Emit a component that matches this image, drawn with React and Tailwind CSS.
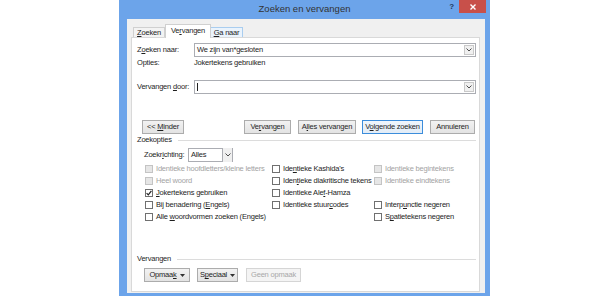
import React from 'react';

const Chevron = () => (
  <svg width="6" height="4" viewBox="0 0 6 4">
    <path d="M0.5 0.5 L3 3 L5.5 0.5" fill="none" stroke="#4d4d4d" strokeWidth="1" />
  </svg>
);

const Caret = () => (
  <svg width="5" height="3" viewBox="0 0 5 3" className="ml-[3px]">
    <path d="M0 0 H5 L2.5 3 Z" fill="#333" />
  </svg>
);

const Combo = ({ value, className = '' }) => (
  <div className={`flex h-[14px] items-center border border-[#abadb3] bg-white ${className}`}>
    <div className="flex-1 pl-[2px] leading-none text-[#1e1e1e]">{value}</div>
    <div className="mr-[1px] flex h-[10px] w-[10px] items-center justify-center border border-[#c9c9c9] bg-[#f0f0f0]">
      <Chevron />
    </div>
  </div>
);

const Btn = ({ children, className = '', primary, disabled }) => {
  let look = 'border-[#acacac] bg-gradient-to-b from-[#f2f2f2] to-[#e3e3e3] text-[#1e1e1e]';
  if (primary) look = 'border-[#3c8ddb] bg-gradient-to-b from-[#f0f6fc] to-[#e2ecf6] text-[#1e1e1e]';
  if (disabled) look = 'border-[#d5d5d5] bg-[#f4f4f4] text-[#a8a8a8]';
  return (
    <div className={`flex h-[14px] items-center justify-center whitespace-nowrap border leading-none ${look} ${className}`}>
      {children}
    </div>
  );
};

const Cb = ({ label, checked, disabled }) => (
  <div className="flex h-[12px] items-center gap-[3px] whitespace-nowrap">
    <div
      className={`flex h-[8px] w-[8px] shrink-0 items-center justify-center border ${
        disabled ? 'border-[#c4c4c4] bg-[#e6e6e6]' : 'border-[#707070] bg-white'
      }`}
    >
      {checked && (
        <svg width="6" height="6" viewBox="0 0 6 6">
          <path d="M0.6 3.2 L2.3 4.9 L5.4 0.8" fill="none" stroke="#222" strokeWidth="1.2" />
        </svg>
      )}
    </div>
    <span className={`leading-none ${disabled ? 'text-[#a3a3a3]' : 'text-[#1e1e1e]'}`}>{label}</span>
  </div>
);

const Group = ({ title }) => (
  <div className="flex h-[10px] items-center gap-[6px]">
    <span className="leading-none text-[#1e1e1e]">{title}</span>
    <div className="h-px flex-1 bg-[#dcdcdc]" />
  </div>
);

export default function App() {
  return (
    <div className="h-[300px] w-[612px] bg-white font-['Liberation_Sans',Arial,sans-serif] text-[7.5px] tracking-[-0.2px] text-[#1e1e1e]">
      <div className="ml-[119px] flex h-[296px] w-[371px] flex-col bg-[#6ca4ea] pb-[3px] pl-[8px] pr-[5px]">
        {/* title bar */}
        <div className="-ml-[8px] -mr-[5px] grid h-[19px] grid-cols-[1fr_auto_1fr]">
          <div />
          <div className="pt-[4px] text-[9.5px] leading-none tracking-normal text-[#333]">Zoeken en vervangen</div>
          <div className="flex justify-end">
            <div className="mr-[5px] pt-[3px] text-[8px] font-bold leading-none text-[#1f3a5e]">?</div>
            <div className="mr-[4px] flex h-[13px] w-[27px] items-center justify-center bg-[#c8504a]">
              <svg width="6" height="6" viewBox="0 0 6 6">
                <path d="M0.5 0.5 L5.5 5.5 M5.5 0.5 L0.5 5.5" stroke="#fff" strokeWidth="1.4" />
              </svg>
            </div>
          </div>
        </div>

        {/* client area */}
        <div className="flex flex-1 flex-col bg-[#f0f0f0] pl-[4px] pr-[5px] pt-[5px]">
          {/* tabs */}
          <div className="flex items-end pl-[2px]">
            <div className="flex h-[10px] w-[32px] items-center justify-center border border-b-0 border-[#d0d0d0] bg-[#f3f3f3] leading-none">
              <span><u>Z</u>oeken</span>
            </div>
            <div className="relative z-10 -mb-px flex h-[14px] w-[46px] items-center justify-center border border-b-0 border-[#d0d0d0] bg-white pb-[2px] leading-none">
              <span>Ve<u>r</u>vangen</span>
            </div>
            <div className="flex h-[10px] w-[32px] items-center justify-center border border-b-0 border-l-0 border-[#a9cdef] bg-[#eaf3fc] leading-none">
              <span><u>G</u>a naar</span>
            </div>
          </div>

          {/* panel */}
          <div className="flex h-[255px] flex-col border border-[#d9d9d9] bg-white pl-[5px] pr-[3px] pt-[5px]">
            <div className="flex items-center">
              <div className="w-[57px] whitespace-nowrap leading-none">Z<u>o</u>eken naar:</div>
              <Combo value="We zijn van*gesloten" className="flex-1" />
            </div>
            <div className="flex h-[12px] items-center">
              <div className="w-[57px] leading-none">Opties:</div>
              <div className="leading-none">Jokertekens gebruiken</div>
            </div>

            <div className="mt-[11px] flex items-center">
              <div className="w-[57px] whitespace-nowrap leading-none">Vervangen <u>d</u>oor:</div>
              <div className="flex flex-1">
                <Combo value={<span className="inline-block h-[8px] w-px bg-[#222] align-middle" />} className="flex-1" />
              </div>
            </div>

            <div className="mt-[26px] flex items-center">
              <Btn className="ml-[5px] w-[42px]"><span>&lt;&lt; <u>M</u>inder</span></Btn>
              <Btn className="ml-[60px] w-[47px]"><span>Ve<u>r</u>vangen</span></Btn>
              <Btn className="ml-[7px] w-[58px]"><span>A<u>l</u>les vervangen</span></Btn>
              <Btn primary className="ml-[6px] w-[61px]"><span>V<u>o</u>lgende zoeken</span></Btn>
              <Btn className="ml-[7px] w-[45px]">Annuleren</Btn>
            </div>

            <div className="mt-px">
              <Group title="Zoekopties" />
            </div>

            <div className="ml-[7px] mt-[3px] flex items-center">
              <div className="w-[44px] whitespace-nowrap leading-none">Zoekr<u>i</u>chting:</div>
              <div className="flex h-[14px] w-[45px] items-center border border-[#abadb3] bg-white">
                <div className="flex-1 pl-[2px] leading-none">Alles</div>
                <div className="flex h-[14px] w-[10px] items-center justify-center border-l border-[#abadb3] bg-[#f0f0f0]">
                  <Chevron />
                </div>
              </div>
            </div>

            <div className="ml-[8px] mt-px flex">
              <div className="flex w-[127px] flex-col">
                <Cb disabled label="Identieke hoofdletters/kleine letters" />
                <Cb disabled label="Heel woord" />
                <Cb checked label={<><u>J</u>okertekens gebruiken</>} />
                <Cb label={<>Bij benadering (<u>E</u>ngels)</>} />
                <Cb label={<>Alle <u>w</u>oordvormen zoeken (Engels)</>} />
              </div>
              <div className="flex w-[102px] flex-col">
                <Cb label={<>Ide<u>n</u>tieke Kashida's</>} />
                <Cb label={<>Iden<u>t</u>ieke diakritische tekens</>} />
                <Cb label={<>Identieke Ale<u>f</u>-Hamza</>} />
                <Cb label={<>Identieke stuur<u>c</u>odes</>} />
              </div>
              <div className="flex flex-col">
                <Cb disabled label="Identieke begintekens" />
                <Cb disabled label="Identieke eindtekens" />
                <div className="h-[12px]" />
                <Cb label={<>Interp<u>u</u>nctie negeren</>} />
                <Cb label={<>S<u>p</u>atietekens negeren</>} />
              </div>
            </div>

            <div className="mt-[31px]">
              <Group title="Vervangen" />
            </div>

            <div className="ml-[7px] mt-[4px] flex items-center">
              <Btn className="w-[46px]"><span>Opmaa<u>k</u></span><Caret /></Btn>
              <Btn className="ml-[7px] w-[41px]"><span>S<u>p</u>eciaal</span><Caret /></Btn>
              <Btn disabled className="ml-[8px] w-[55px]">Geen opmaak</Btn>
            </div>
          </div>
        </div>
      </div>
    </div>
  );
}
